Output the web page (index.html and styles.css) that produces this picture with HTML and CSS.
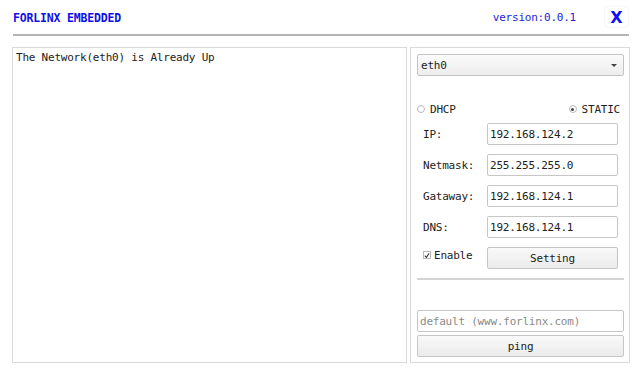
FILE: index.html
```html
<!DOCTYPE html>
<html lang="en">
<head>
  <meta charset="UTF-8">
  <meta name="viewport" content="width=device-width, initial-scale=1.0">
  <title>Forlinx Embedded | Network</title>
  <link rel="stylesheet" href="styles.css">
</head>
<body>
  <div class="header">
    <div class="title">FORLINX EMBEDDED</div>
    <div class="header-right">
      <span class="version">version:0.0.1</span>
      <div class="close">X</div>
    </div>
  </div>

  <div class="main">
    <div class="log">The Network(eth0) is Already Up</div>

    <div class="panel">
      <div class="select">
        <span>eth0</span>
        <span class="arrow"></span>
      </div>

      <div class="radios">
        <div class="radio-item">
          <span class="radio"></span>
          <span>DHCP</span>
        </div>
        <div class="radio-item">
          <span class="radio checked"></span>
          <span>STATIC</span>
        </div>
      </div>

      <div class="form-row first">
        <label>IP:</label>
        <div class="field">192.168.124.2</div>
      </div>
      <div class="form-row">
        <label>Netmask:</label>
        <div class="field">255.255.255.0</div>
      </div>
      <div class="form-row">
        <label>Gataway:</label>
        <div class="field">192.168.124.1</div>
      </div>
      <div class="form-row">
        <label>DNS:</label>
        <div class="field">192.168.124.1</div>
      </div>
      <div class="form-row">
        <label class="enable">
          <span class="checkbox">
            <svg width="7" height="7" viewBox="0 0 7 7"><path d="M1 3.6 L2.8 5.6 L6 1" fill="none" stroke="#333" stroke-width="1.2"/></svg>
          </span>
          Enable
        </label>
        <div class="button setting">Setting</div>
      </div>

      <div class="separator"></div>

      <div class="ping-group">
        <div class="field wide placeholder">default (www.forlinx.com)</div>
        <div class="button wide">ping</div>
      </div>
    </div>
  </div>
</body>
</html>
```

FILE: styles.css
```css
body {
  margin: 0;
  background: #ffffff;
  color: #222;
  font-family: "DejaVu Sans Mono", "Liberation Mono", monospace;
  font-size: 11px;
  letter-spacing: -0.22px;
  width: 643px;
  height: 376px;
  overflow: hidden;
}

.header {
  height: 36px;
  margin: 0 14px 0 13px;
  border-bottom: 2px solid #b4b4b4;
  display: flex;
  align-items: center;
  justify-content: space-between;
  box-sizing: border-box;
}

.title {
  color: #0f0fe8;
  font-weight: bold;
  font-size: 11.5px;
  letter-spacing: -0.17px;
  padding-top: 1px;
}

.header-right {
  display: flex;
  align-items: center;
}

.version {
  color: #2222dd;
  margin-right: 29px;
}

.close {
  width: 23px;
  height: 20px;
  margin-right: 1px;
  border-radius: 4px;
  box-shadow: 0 0 2px rgba(0, 0, 0, 0.12);
  color: #1010f0;
  font-family: "DejaVu Sans", sans-serif;
  font-weight: bold;
  font-size: 16px;
  letter-spacing: 0;
  display: flex;
  align-items: center;
  justify-content: center;
}

.main {
  display: flex;
  gap: 3px;
  margin: 11px 13px 0 12px;
  height: 316px;
}

.log {
  width: 395px;
  border: 1px solid #d9d9d9;
  box-sizing: border-box;
  padding: 3px 3px;
  line-height: 13px;
  color: #222;
}

.panel {
  width: 220px;
  border: 1px solid #d9d9d9;
  box-sizing: border-box;
  padding: 6px 5px 5px 6px;
  display: flex;
  flex-direction: column;
}

.select {
  height: 22px;
  border: 1px solid #c4c4c4;
  border-radius: 2px;
  background: linear-gradient(to bottom, #fbfbfb, #ededed);
  box-sizing: border-box;
  display: flex;
  align-items: center;
  justify-content: space-between;
  padding: 0 6px 0 3px;
}

.arrow {
  width: 0;
  height: 0;
  border-left: 3px solid transparent;
  border-right: 3px solid transparent;
  border-top: 3px solid #444;
}

.radios {
  display: flex;
  justify-content: space-between;
  align-items: center;
  height: 14px;
  margin-top: 26px;
  margin-right: 4px;
}

.radio-item {
  display: flex;
  align-items: center;
  gap: 5px;
}

.radio {
  width: 8px;
  height: 8px;
  border: 1px solid #b9b9b9;
  border-radius: 50%;
  box-sizing: border-box;
  background: #fff;
  position: relative;
}

.radio.checked::after {
  content: "";
  position: absolute;
  left: 1.5px;
  top: 1.5px;
  width: 3px;
  height: 3px;
  border-radius: 50%;
  background: #444;
}

.form-row {
  display: flex;
  align-items: center;
  justify-content: space-between;
  margin: 9px 6px 0 6px;
  height: 22px;
}

.form-row.first {
  margin-top: 7px;
}

.form-row label {
  display: flex;
  align-items: center;
}

.field {
  width: 131px;
  height: 22px;
  border: 1px solid #c6c6c6;
  border-radius: 2px;
  box-sizing: border-box;
  padding: 0 2px;
  display: flex;
  align-items: center;
  background: #fff;
}

.enable {
  margin-top: -6px;
  gap: 3px;
}

.checkbox {
  width: 8px;
  height: 8px;
  border: 1px solid #b9b9b9;
  box-sizing: border-box;
  display: flex;
  align-items: center;
  justify-content: center;
  background: #fff;
}

.button {
  height: 22px;
  border: 1px solid #c6c6c6;
  border-radius: 2px;
  box-sizing: border-box;
  background: linear-gradient(to bottom, #f9f9f9, #ebebeb);
  display: flex;
  align-items: center;
  justify-content: center;
}

.setting {
  width: 131px;
}

.separator {
  height: 2px;
  background: #d4d4d4;
  margin-top: 9px;
}

.ping-group {
  margin-top: auto;
  display: flex;
  flex-direction: column;
  gap: 3px;
}

.wide {
  width: 100%;
}

.placeholder {
  color: #8a8a8a;
  height: 22px;
}
```
